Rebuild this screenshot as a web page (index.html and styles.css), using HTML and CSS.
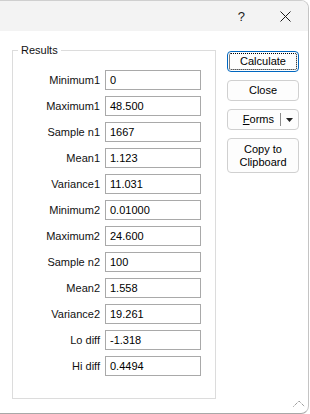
FILE: index.html
```html
<!DOCTYPE html>
<html lang="en">
<head>
    <meta charset="UTF-8">
    <meta name="viewport" content="width=device-width, initial-scale=1.0">
    <title>Results</title>
    <link rel="stylesheet" href="styles.css">
</head>
<body>
    <div class="window">
        <div class="titlebar">
            <span class="help">?</span>
            <span class="close-x">
                <svg width="11" height="11" viewBox="0 0 11 11"><path d="M0.5 0.5 L10.5 10.5 M10.5 0.5 L0.5 10.5" stroke="#1a1a1a" stroke-width="1" fill="none"/></svg>
            </span>
        </div>

        <div class="main">
            <fieldset class="results">
                <legend>Results</legend>
                <div class="rows">
                    <label>Minimum1</label><div class="field">0</div>
                    <label>Maximum1</label><div class="field">48.500</div>
                    <label>Sample n1</label><div class="field">1667</div>
                    <label>Mean1</label><div class="field">1.123</div>
                    <label>Variance1</label><div class="field">11.031</div>
                    <label>Minimum2</label><div class="field">0.01000</div>
                    <label>Maximum2</label><div class="field">24.600</div>
                    <label>Sample n2</label><div class="field">100</div>
                    <label>Mean2</label><div class="field">1.558</div>
                    <label>Variance2</label><div class="field">19.261</div>
                    <label>Lo diff</label><div class="field">-1.318</div>
                    <label>Hi diff</label><div class="field">0.4494</div>
                </div>
            </fieldset>

            <div class="buttons">
                <button class="btn focused"><span class="focus-ring">Calculate</span></button>
                <button class="btn">Close</button>
                <button class="btn forms">
                    <span class="forms-label"><u>F</u>orms</span>
                    <span class="divider"></span>
                    <svg width="7" height="4" viewBox="0 0 7 4"><path d="M0 0 H7 L3.5 4 Z" fill="#222"/></svg>
                </button>
                <button class="btn tall">Copy to<br>Clipboard</button>
            </div>
        </div>

        <svg class="grip" width="12" height="7" viewBox="0 0 12 7"><path d="M0.5 6.5 L6 1 L11.5 6.5" stroke="#6e6e6e" stroke-width="1" fill="none" stroke-dasharray="1 1"/></svg>
    </div>
</body>
</html>
```

FILE: styles.css
```css
body {
    margin: 0;
    background: #ffffff;
    font-family: "Liberation Sans", Arial, sans-serif;
    font-size: 11px;
    color: #000;
}

.window {
    position: relative;
    width: 308px;
    height: 412px;
    background: #fff;
    border-top: 1px solid #cfcfcf;
    border-right: 1px solid #c4c4c4;
    border-bottom: 1px solid #a8a8a8;
    border-radius: 0 8px 8px 0;
    overflow: hidden;
}

.titlebar {
    height: 30px;
    background: #f3f3f3;
    display: flex;
    align-items: center;
    justify-content: flex-end;
    padding-right: 17px;
}

.help {
    font-size: 13px;
    margin-right: 35px;
    color: #1a1a1a;
}

.close-x {
    display: flex;
    margin-top: 1px;
}

.main {
    display: flex;
    align-items: flex-start;
    padding: 12px 0 0 12px;
}

.results {
    margin: 0;
    padding: 13px 14px 22px 0;
    border: 1px solid #dcdcdc;
    min-width: 0;
}

.results legend {
    margin-left: 5px;
    padding: 0 3px 0 3px;
    line-height: 14px;
    color: #111;
}

.rows {
    display: grid;
    grid-template-columns: 87px 96px;
    column-gap: 5px;
    row-gap: 6px;
}

.rows label {
    text-align: right;
    line-height: 20px;
    color: #111;
}

.field {
    height: 18px;
    line-height: 18px;
    border: 1px solid #a9a9a9;
    padding-left: 4px;
    color: #000;
}

.buttons {
    display: flex;
    flex-direction: column;
    gap: 8px;
    margin: 8px 0 0 11px;
}

.btn {
    width: 72px;
    height: 21px;
    padding: 0;
    background: #fdfdfd;
    border: 1px solid #d0d0d0;
    border-radius: 4px;
    font-family: inherit;
    font-size: 11px;
    color: #000;
    line-height: 13px;
}

.btn.focused {
    border-color: #0067c0;
    padding: 1px;
}

.focus-ring {
    display: block;
    height: 15px;
    line-height: 15px;
    border: 1px dotted #000;
    border-radius: 2px;
}

.btn.forms {
    display: flex;
    align-items: center;
    justify-content: flex-end;
    padding-right: 5px;
}

.forms-label {
    margin-right: 6px;
}

.divider {
    width: 1px;
    height: 13px;
    background: #8a8a8a;
    margin-right: 5px;
}

.btn.tall {
    height: 35px;
}

.grip {
    position: absolute;
    right: 3px;
    bottom: 6px;
}
```
